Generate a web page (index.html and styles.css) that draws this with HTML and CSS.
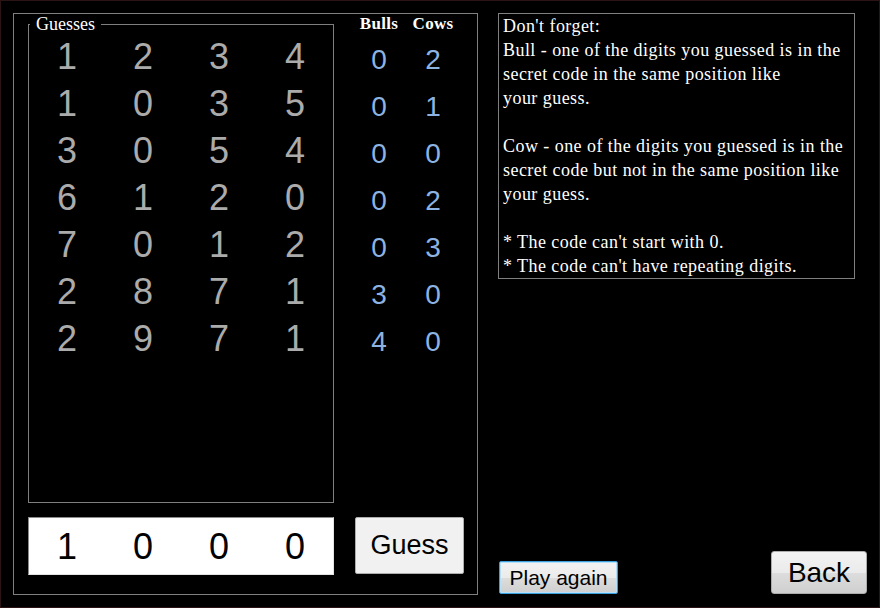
FILE: index.html
```html
<!DOCTYPE html>
<html lang="en">
<head>
<meta charset="utf-8">
<title>Bulls and Cows</title>
<link rel="stylesheet" href="styles.css">
</head>
<body>
<div class="window">
  <div class="game">
    <fieldset class="guesses">
      <legend class="legend">Guesses</legend>
      <div class="guess-grid">
        <span>1</span><span>2</span><span>3</span><span>4</span>
        <span>1</span><span>0</span><span>3</span><span>5</span>
        <span>3</span><span>0</span><span>5</span><span>4</span>
        <span>6</span><span>1</span><span>2</span><span>0</span>
        <span>7</span><span>0</span><span>1</span><span>2</span>
        <span>2</span><span>8</span><span>7</span><span>1</span>
        <span>2</span><span>9</span><span>7</span><span>1</span>
      </div>
    </fieldset>
    <div class="stats">
      <div class="stat-head">Bulls</div><div class="stat-head">Cows</div>
      <span>0</span><span>2</span>
      <span>0</span><span>1</span>
      <span>0</span><span>0</span>
      <span>0</span><span>2</span>
      <span>0</span><span>3</span>
      <span>3</span><span>0</span>
      <span>4</span><span>0</span>
    </div>
    <div class="code-input"><span>1</span><span>0</span><span>0</span><span>0</span></div>
    <button class="btn btn-guess" type="button">Guess</button>
  </div>
  <div class="side">
    <div class="info">Don't forget:<br>Bull - one of the digits you guessed is in the<br>secret code in the same position like<br>your guess.<br><br>Cow - one of the digits you guessed is in the<br>secret code but not in the same position like<br>your guess.<br><br>* The code can't start with 0.<br>* The code can't have repeating digits.</div>
    <div class="actions">
      <button class="btn btn-play" type="button">Play again</button>
      <button class="btn btn-back" type="button">Back</button>
    </div>
  </div>
</div>
</body>
</html>
```
FILE: styles.css
```css
html, body {
  margin: 0;
  padding: 0;
  background: #000;
}

.window {
  width: 880px;
  height: 608px;
  box-sizing: border-box;
  border: 1px solid #2a1414;
  padding: 12px;
  display: flex;
  background: #000;
}

.game {
  width: 465px;
  height: 582px;
  box-sizing: border-box;
  border: 1px solid #7f7f7f;
  padding: 0 0 19px 14px;
  display: grid;
  grid-template-columns: 306px 1fr;
  grid-template-rows: 489px 58px;
  column-gap: 18px;
  row-gap: 14px;
}

.guesses {
  margin: 0;
  padding: 0;
  border: 1px solid #7f7f7f;
  min-width: 0;
  box-sizing: border-box;
  height: 489px;
}

.legend {
  margin-left: 1px;
  padding: 0 6px;
  font-family: "Liberation Serif", serif;
  font-size: 18px;
  line-height: 20px;
  color: #fff;
}

.guess-grid {
  margin-top: -1px;
  display: grid;
  grid-template-columns: repeat(4, 76px);
  font-family: "Liberation Sans", Arial, sans-serif;
  font-size: 36px;
  line-height: 47px;
  color: #ababab;
  text-align: center;
}

.stats {
  display: grid;
  grid-template-columns: 54px 54px;
  grid-auto-rows: 47px;
  grid-template-rows: 22px;
  align-content: start;
  font-family: "Liberation Sans", Arial, sans-serif;
  font-size: 28px;
  line-height: 47px;
  color: #8db3e2;
  text-align: center;
}

.stat-head {
  font-family: "Liberation Serif", serif;
  font-size: 17px;
  font-weight: bold;
  line-height: 20px;
  letter-spacing: 0.3px;
  color: #fff;
}

.code-input {
  box-sizing: border-box;
  height: 58px;
  border: 1px solid;
  border-color: #8a8a8a #e3e3e3 #e3e3e3 #8a8a8a;
  background: #fff;
  display: grid;
  grid-template-columns: repeat(4, 76px);
  padding-top: 3px;
  font-family: "Liberation Sans", Arial, sans-serif;
  font-size: 36px;
  line-height: 52px;
  color: #000;
  text-align: center;
}

.btn {
  font-family: "Liberation Sans", Arial, sans-serif;
  color: #000;
  padding: 0;
  box-sizing: border-box;
  cursor: pointer;
}

.btn-guess {
  margin-left: 3px;
  width: 109px;
  height: 57px;
  border: 1px solid #adadad;
  border-radius: 2px;
  background: #f1f1f1;
  font-size: 27px;
}

.side {
  flex: 1;
  display: flex;
  flex-direction: column;
  justify-content: space-between;
  padding-left: 20px;
  padding-bottom: 1px;
}

.info {
  width: 357px;
  height: 266px;
  box-sizing: border-box;
  border: 1px solid #7f7f7f;
  padding: 0 0 0 4px;
  font-family: "Liberation Serif", serif;
  font-size: 18px;
  line-height: 24px;
  letter-spacing: 0.45px;
  color: #fff;
  white-space: nowrap;
}

.actions {
  display: flex;
  align-items: flex-end;
  justify-content: space-between;
}

.btn-play {
  margin-left: 1px;
  width: 119px;
  height: 33px;
  border: 1px solid #3c9fdd;
  border-radius: 2px;
  background: linear-gradient(#f2f2f2 0%, #ebebeb 50%, #dddddd 51%, #cfcfcf 100%);
  font-size: 21px;
  box-shadow: inset 0 0 0 1px #b6e0f7;
}

.btn-back {
  width: 96px;
  height: 43px;
  border: 1px solid #acacac;
  border-radius: 3px;
  background: linear-gradient(#f2f2f2 0%, #ebebeb 50%, #dddddd 51%, #cfcfcf 100%);
  font-size: 28px;
}
```
